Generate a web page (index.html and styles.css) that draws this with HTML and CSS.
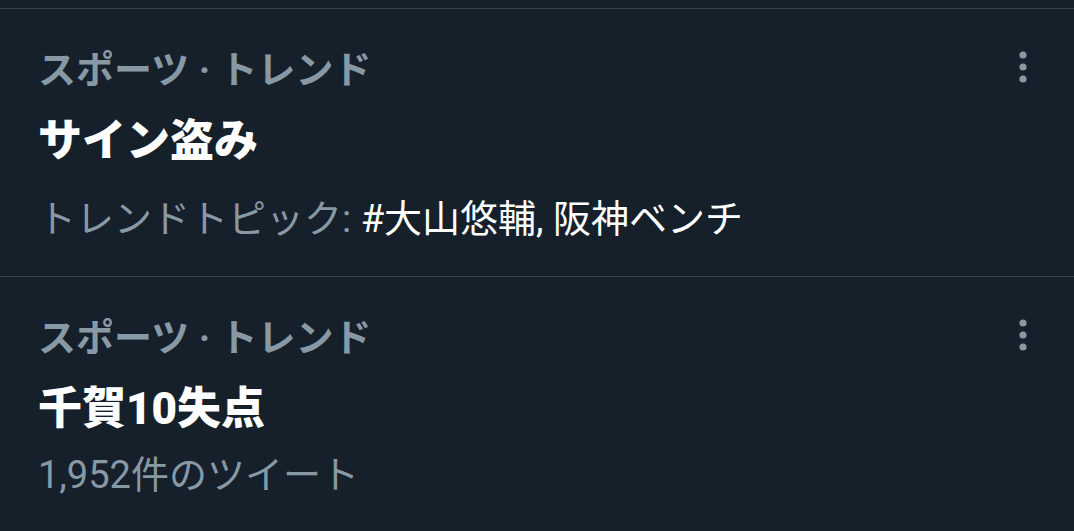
FILE: index.html
```html
<!DOCTYPE html>
<html lang="ja">
<head>
<meta charset="utf-8">
<link rel="stylesheet" href="styles.css">
</head>
<body>
<div class="list">
  <div class="item">
    <div class="content">
      <div class="category">スポーツ · トレンド</div>
      <div class="title">サイン盗み</div>
      <div class="meta">トレンドトピック: <span class="topics">#大山悠輔, 阪神ベンチ</span></div>
    </div>
    <div class="more" aria-label="More">
      <svg width="10" height="34" viewBox="0 0 10 34"><circle cx="5" cy="5" r="3.6"/><circle cx="5" cy="17" r="3.6"/><circle cx="5" cy="29" r="3.6"/></svg>
    </div>
  </div>
  <div class="item">
    <div class="content">
      <div class="category">スポーツ · トレンド</div>
      <div class="title">千賀10失点</div>
      <div class="meta meta-last">1,952件のツイート</div>
    </div>
    <div class="more" aria-label="More">
      <svg width="10" height="34" viewBox="0 0 10 34"><circle cx="5" cy="5" r="3.6"/><circle cx="5" cy="17" r="3.6"/><circle cx="5" cy="29" r="3.6"/></svg>
    </div>
  </div>
</div>
</body>
</html>
```

FILE: styles.css
```css
html, body {
  margin: 0;
  padding: 0;
  background: #16202b;
}
body {
  padding-top: 8px;
  font-family: Roboto, "Noto Sans CJK JP", sans-serif;
  color: #ffffff;
}
.list {
  border-top: 1px solid #38444d;
}
.item {
  display: flex;
  justify-content: space-between;
  padding: 25px 38px 0 38px;
  border-bottom: 1px solid #38444d;
}
.item:last-child {
  border-bottom: none;
}
.content {
  display: flex;
  flex-direction: column;
}
.category {
  font-size: 38px;
  line-height: 72px;
  font-weight: 700;
  color: #8899a6;
  white-space: nowrap;
}
.title {
  font-size: 44px;
  line-height: 71px;
  font-weight: 900;
  color: #ffffff;
  white-space: nowrap;
}
.meta {
  font-size: 38px;
  line-height: 79px;
  margin-top: 3px;
  color: #8899a6;
  white-space: nowrap;
  padding-bottom: 17px;
}
.meta-last {
  line-height: 55px;
}
.topics {
  color: #ffffff;
}
.more {
  padding-top: 16px;
  margin-right: 8px;
}
.more svg {
  fill: #8899a6;
  display: block;
}
```
